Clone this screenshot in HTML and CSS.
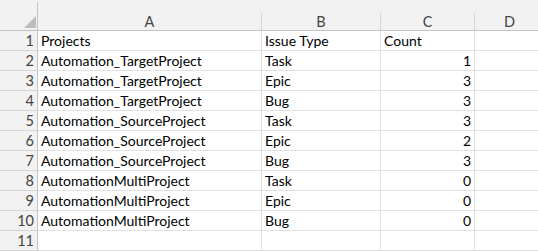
FILE: index.html
```html
<!DOCTYPE html>
<html lang="en">
<head>
  <meta charset="UTF-8">
  <title>Sheet</title>
  <link rel="stylesheet" href="styles.css">
</head>
<body>
  <div class="sheet">
    <div class="col-heads">
      <div class="corner"><span class="tri"></span></div>
      <div class="col-head a">A</div>
      <div class="col-head b">B</div>
      <div class="col-head c">C</div>
      <div class="col-head d">D</div>
    </div>
    <div class="row"><div class="num">1</div><div class="cell a">Projects</div><div class="cell b">Issue Type</div><div class="cell c left">Count</div><div class="cell d"></div></div>
    <div class="row"><div class="num">2</div><div class="cell a">Automation_TargetProject</div><div class="cell b">Task</div><div class="cell c">1</div><div class="cell d"></div></div>
    <div class="row"><div class="num">3</div><div class="cell a">Automation_TargetProject</div><div class="cell b">Epic</div><div class="cell c">3</div><div class="cell d"></div></div>
    <div class="row"><div class="num">4</div><div class="cell a">Automation_TargetProject</div><div class="cell b">Bug</div><div class="cell c">3</div><div class="cell d"></div></div>
    <div class="row"><div class="num">5</div><div class="cell a">Automation_SourceProject</div><div class="cell b">Task</div><div class="cell c">3</div><div class="cell d"></div></div>
    <div class="row"><div class="num">6</div><div class="cell a">Automation_SourceProject</div><div class="cell b">Epic</div><div class="cell c">2</div><div class="cell d"></div></div>
    <div class="row"><div class="num">7</div><div class="cell a">Automation_SourceProject</div><div class="cell b">Bug</div><div class="cell c">3</div><div class="cell d"></div></div>
    <div class="row"><div class="num">8</div><div class="cell a">AutomationMultiProject</div><div class="cell b">Task</div><div class="cell c">0</div><div class="cell d"></div></div>
    <div class="row"><div class="num">9</div><div class="cell a">AutomationMultiProject</div><div class="cell b">Epic</div><div class="cell c">0</div><div class="cell d"></div></div>
    <div class="row"><div class="num">10</div><div class="cell a">AutomationMultiProject</div><div class="cell b">Bug</div><div class="cell c">0</div><div class="cell d"></div></div>
    <div class="row"><div class="num">11</div><div class="cell a"></div><div class="cell b"></div><div class="cell c"></div><div class="cell d"></div></div>
  </div>
</body>
</html>
```

FILE: styles.css
```css
body {
  margin: 0;
  background-color: #ffffff;
  font-family: Lato, "Open Sans", sans-serif;
  font-size: 14px;
  color: #000000;
}
.sheet {
  width: 538px;
  overflow: hidden;
}
.col-heads {
  display: flex;
  align-items: flex-end;
  height: 31px;
  background-color: #f2f2f2;
  border-bottom: 1px solid #c4c4c4;
  box-sizing: border-box;
}
.corner {
  position: relative;
  flex: none;
  width: 38px;
  height: 28px;
  border-right: 1px solid #c4c4c4;
  box-sizing: border-box;
}
.tri {
  position: absolute;
  left: 24px;
  top: 14px;
  width: 12px;
  height: 12px;
  background-color: #bcbcbc;
  clip-path: polygon(100% 0, 100% 100%, 0 100%);
}
.col-head {
  flex: none;
  height: 17px;
  border-right: 1px solid #d6d6d6;
  box-sizing: border-box;
  text-align: center;
  color: #444444;
  font-size: 14.5px;
  line-height: 17px;
}
.a { width: 224px; }
.b { width: 119px; }
.c { width: 94px; }
.d { width: 70px; }
.row {
  display: flex;
  height: 20px;
}
.num {
  flex: none;
  width: 38px;
  background-color: #f2f2f2;
  border-right: 1px solid #c4c4c4;
  border-bottom: 1px solid #d6d6d6;
  box-sizing: border-box;
  text-align: right;
  padding-right: 3px;
  color: #444444;
  font-size: 14.5px;
  line-height: 20px;
}
.cell {
  flex: none;
  border-right: 1px solid #e1e1e1;
  border-bottom: 1px solid #e1e1e1;
  box-sizing: border-box;
  padding: 0 3px;
  line-height: 20px;
  white-space: nowrap;
  overflow: hidden;
}
.cell.c { text-align: right; }
.cell.c.left { text-align: left; }
```
